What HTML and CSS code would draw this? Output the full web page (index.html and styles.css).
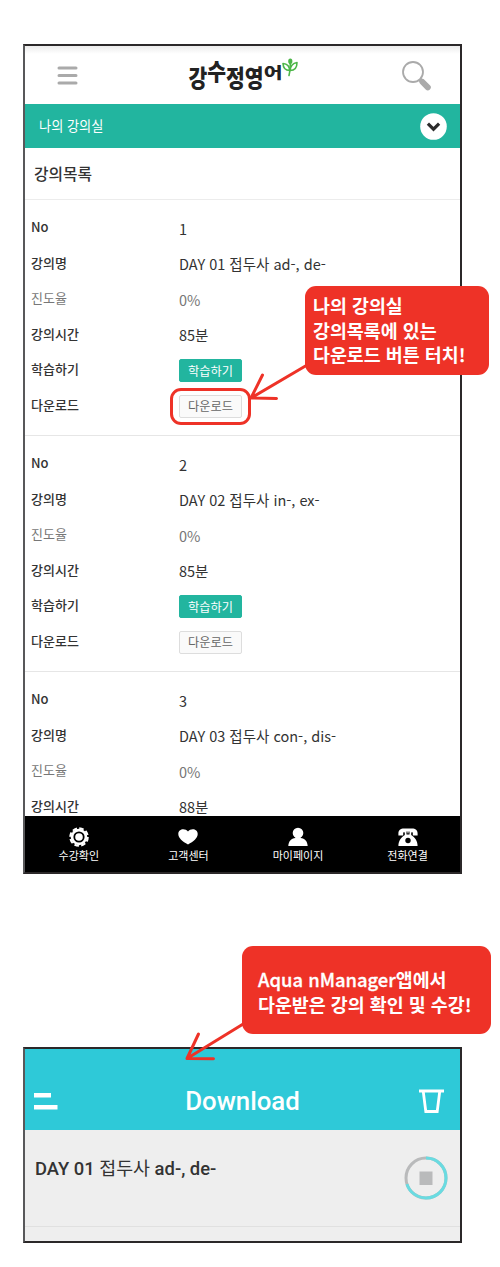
FILE: index.html
```
<!DOCTYPE html>
<html lang="ko">
<head>
  <meta charset="UTF-8" />
  <meta name="viewport" content="width=device-width, initial-scale=1.0"/>
  <title>강수정영어</title>
  <link rel="stylesheet" href="styles.css">
</head>
<body>

  <div class="guide">
    <div class="screen lecture-screen">
      <div class="header">
        <svg class="menu-icon" width="21" height="19" viewBox="0 0 21 19">
          <path d="M2 2h17M2 9.5h17M2 17h17" stroke="#aaa" stroke-width="3" stroke-linecap="round"/>
        </svg>
        <div class="brand">
          <span class="brand-name"><span class="low">강</span><span class="high">수</span><span class="low">정영</span><span class="short">어</span></span>
          <svg class="leaf" width="16" height="19" viewBox="0 0 16 19" fill="none" stroke="#4cb648" stroke-width="1.6" stroke-linecap="round" stroke-linejoin="round">
            <path d="M7 17.5C8 14 8 11 8.300 6"/>
            <path d="M7.700 12.500C3.500 12.500 1.200 10 1 5.500C4.500 5.800 7.500 8 7.700 12.500Z"/>
            <path d="M8.200 12.500C12.500 12.500 15 9.500 15 4.500C11.200 5 8.500 7.500 8.200 12.500Z"/>
            <ellipse cx="8.300" cy="3.200" rx="1.300" ry="2" fill="#4cb648"/>
          </svg>
        </div>
        <svg class="search-icon" width="30" height="30" viewBox="0 0 30 30" fill="none" stroke="#aaa">
          <circle cx="11" cy="11" r="10" stroke-width="1.800"/>
          <path d="M18 18.500l2.500 2.500" stroke-width="4"/>
          <path d="M20.500 21l5.300 5.300" stroke-width="6" stroke-linecap="round"/>
        </svg>
      </div>

      <div class="room-bar">
        <span>나의 강의실</span>
        <svg width="27" height="27" viewBox="0 0 27 27">
          <circle cx="13.500" cy="13.500" r="13.300" fill="#fff"/>
          <path d="M7.900 10.700l5.600 5.500l5.600-5.500" fill="none" stroke="#2b2b2b" stroke-width="3.200"/>
        </svg>
      </div>

      <h2 class="list-title">강의목록</h2>

      <div class="lecture">
        <div class="row"><span class="label">No</span><span class="value">1</span></div>
        <div class="row"><span class="label">강의명</span><span class="value">DAY 01 접두사 ad-, de-</span></div>
        <div class="row muted"><span class="label">진도율</span><span class="value">0%</span></div>
        <div class="row"><span class="label">강의시간</span><span class="value">85분</span></div>
        <div class="row"><span class="label">학습하기</span><button class="study-btn">학습하기</button></div>
        <div class="row"><span class="label">다운로드</span><button class="download-btn">다운로드</button></div>
      </div>

      <div class="lecture">
        <div class="row"><span class="label">No</span><span class="value">2</span></div>
        <div class="row"><span class="label">강의명</span><span class="value">DAY 02 접두사 in-, ex-</span></div>
        <div class="row muted"><span class="label">진도율</span><span class="value">0%</span></div>
        <div class="row"><span class="label">강의시간</span><span class="value">85분</span></div>
        <div class="row"><span class="label">학습하기</span><button class="study-btn">학습하기</button></div>
        <div class="row"><span class="label">다운로드</span><button class="download-btn">다운로드</button></div>
      </div>

      <div class="lecture last">
        <div class="row"><span class="label">No</span><span class="value">3</span></div>
        <div class="row"><span class="label">강의명</span><span class="value">DAY 03 접두사 con-, dis-</span></div>
        <div class="row muted"><span class="label">진도율</span><span class="value">0%</span></div>
        <div class="row"><span class="label">강의시간</span><span class="value">88분</span></div>
      </div>

      <div class="tabbar">
        <div class="tab">
          <svg width="20" height="20" viewBox="0 0 20 20">
            <circle cx="10" cy="10" r="8.800" fill="none" stroke="#fff" stroke-width="2" stroke-dasharray="4.600 2.310"/>
            <circle cx="10" cy="10" r="8.300" fill="#fff"/>
            <circle cx="10" cy="10" r="4.700" fill="#fff" stroke="#000" stroke-width="1.800"/>
          </svg>
          <span>수강확인</span>
        </div>
        <div class="tab">
          <svg width="20" height="20" viewBox="0 0 20 20">
            <path d="M10 17.500C4.500 14.500.3 11 .3 7C.3 1.800 7 .8 10 4.500C13 .8 19.700 1.800 19.700 7C19.700 11 15.500 14.500 10 17.500Z" fill="#fff"/>
          </svg>
          <span>고객센터</span>
        </div>
        <div class="tab">
          <svg width="20" height="20" viewBox="0 0 20 20" fill="#fff">
            <circle cx="10" cy="6" r="5.300"/>
            <path d="M7.500 9h5v2C17 11.500 19.500 14.500 19.700 19H.3C.5 14.500 3 11.500 7.500 11Z"/>
          </svg>
          <span>마이페이지</span>
        </div>
        <div class="tab">
          <svg width="20" height="20" viewBox="0 0 20 20">
            <path d="M.4 8.500V6.500C.4 3 2.500 1.500 6 1.500H14C17.500 1.500 19.600 3 19.600 6.500V8.500H14.800V6.200H5.200V8.500Z" fill="#fff"/>
            <path d="M6.800 4.500h1.700v3h3v-3h1.700v3.500C17 10.500 19.600 14 19.600 19H.4C.4 14 3 10.500 6.800 8Z" fill="#fff"/>
            <path d="M6 5v2M9 4.500v2M11 4.500v2M14 5v2" stroke="#000" stroke-width="1"/>
            <circle cx="10" cy="13.500" r="2.700" fill="#000"/>
          </svg>
          <span>전화연결</span>
        </div>
      </div>
    </div>

    <div class="screen download-screen">
      <div class="download-header">
        <svg width="24" height="17" viewBox="0 0 24 17" fill="#fff">
          <rect y="0" width="17" height="4.500"/>
          <rect y="12" width="23.500" height="4.500"/>
        </svg>
        <span class="download-title">Download</span>
        <svg width="25" height="25" viewBox="0 0 25 25" fill="none" stroke="#fff">
          <path d="M0 2h25" stroke-width="3"/>
          <path d="M4.200 2L6.800 22.500H18.200L20.800 2" stroke-width="2.800"/>
        </svg>
      </div>
      <div class="download-item">
        <span class="download-name">DAY 01 <span class="thin">접두사</span> ad-, de-</span>
        <svg width="44" height="44" viewBox="0 0 44 44">
          <circle cx="22" cy="22" r="20" fill="none" stroke="#b9babb" stroke-width="3"/>
          <circle cx="22" cy="22" r="20" fill="none" stroke="#69dbe1" stroke-width="3" pathLength="100" stroke-dasharray="70 30" transform="rotate(-90 22 22)"/>
          <rect x="15.500" y="15.500" width="13" height="13.500" fill="#b9babb"/>
        </svg>
      </div>
    </div>

    <!-- callouts -->
    <div class="highlight"></div>
    <svg class="arrow arrow-list" width="70" height="42" viewBox="0 0 70 42">
      <path d="M63 3.500L6 37M17.500 14L6 37M6 37L31.500 37.500"/>
    </svg>
    <div class="callout callout-list">나의 강의실<br>강의목록에 있는<br>다운로드 버튼 터치!</div>

    <svg class="arrow arrow-app" width="70" height="42" viewBox="0 0 70 42">
      <path d="M63 2.500L6 37.500M17.500 13L6 37.500M6 37.500L32.500 37.800"/>
    </svg>
    <div class="callout callout-app"><span class="latin">Aqua nManager</span>앱에서<br>다운받은 강의 확인 및 수강!</div>
  </div>

</body>
</html>
```
FILE: styles.css
```
* {
  box-sizing: border-box;
  margin: 0;
  padding: 0;
}

body {
  font-family: 'Noto Sans CJK KR', sans-serif;
  background-color: #fff;
  color: #333;
}

svg {
  display: block;
  flex-shrink: 0;
}

.guide {
  position: relative;
  height: 1267px;
  padding: 44px 38px 0 23px;
}

.screen {
  border: 2px solid #2b2829;
  border-left-color: #58585a;
  overflow: hidden;
}

.lecture-screen {
  display: flex;
  flex-direction: column;
  height: 830px;
}

.header {
  display: flex;
  align-items: flex-start;
  justify-content: space-between;
  flex-shrink: 0;
  height: 58px;
  padding: 12px 28px 0 32px;
  background: linear-gradient(#ececec, #fff 8px);
}

.menu-icon {
  margin-top: 8px;
}

.search-icon {
  margin-top: 3px;
}

.brand {
  display: flex;
  margin-left: 7px;
}

.brand-name {
  display: flex;
  margin-top: 1px;
  font-size: 20.4px;
  font-weight: 900;
  line-height: 29px;
  color: #222;
}

.brand-name .low {
  transform: translateY(3px) scaleY(1.18);
}

.brand-name .high {
  transform: translateY(-3px) scaleY(1.1);
}

.brand-name .short {
  transform: translateY(-2px) scaleY(0.75);
}

.room-bar {
  display: flex;
  align-items: center;
  justify-content: space-between;
  flex-shrink: 0;
  height: 44px;
  padding: 0 13px 0 14px;
  background-color: #22b59f;
  color: #fff;
  font-size: 13.2px;
}

.room-bar span {
  padding-bottom: 1px;
}

.list-title {
  flex-shrink: 0;
  height: 52px;
  line-height: 52px;
  padding-left: 9px;
  border-bottom: 1px solid #ececec;
  font-size: 15.8px;
  font-weight: 500;
}

.lecture {
  flex-shrink: 0;
  height: 236px;
  padding: 9.5px 6px 0;
  border-bottom: 1px solid #e6e6e6;
}

.lecture.last {
  flex: 1;
  min-height: 0;
  border-bottom: none;
  overflow: hidden;
}

.row {
  display: flex;
  align-items: center;
  height: 35.5px;
  font-size: 14.5px;
}

.label {
  width: 148px;
  padding-bottom: 1px;
  font-size: 13px;
  font-weight: 500;
}

.value {
  padding-top: 2px;
}

.muted {
  color: #777;
}

.muted .label {
  font-weight: 400;
}

.study-btn, .download-btn {
  width: 63px;
  height: 23px;
  margin-top: 3px;
  border: 1px solid #22b59f;
  border-radius: 2px;
  background-color: #22b59f;
  color: #fff;
  font-family: inherit;
  font-size: 12.2px;
  line-height: 20px;
}

.download-btn {
  border-color: #ddd;
  background-color: #fafafa;
  color: #666;
}

.tabbar {
  display: flex;
  flex-shrink: 0;
  height: 56px;
  background-color: #000;
  color: #fff;
}

.tab {
  flex: 0 0 109.6px;
  display: flex;
  flex-direction: column;
  align-items: center;
  padding: 11px 2px 0 0;
  font-size: 11px;
  line-height: 17px;
}

.download-screen {
  height: 196px;
  margin-top: 173px;
  background-color: #eee;
}

.download-header {
  display: flex;
  align-items: center;
  justify-content: space-between;
  height: 81px;
  padding: 24px 16px 0 9px;
  background-color: #2ec9d8;
}

.download-title {
  margin-left: 8px;
  padding-bottom: 1px;
  color: #fff;
  font-family: Roboto, sans-serif;
  font-size: 25.8px;
  font-weight: 500;
}

.download-item {
  display: flex;
  align-items: flex-start;
  justify-content: space-between;
  height: 97px;
  padding: 26px 12px 0 10px;
  border-bottom: 1px solid #e0e0e0;
}

.download-name {
  font-family: Roboto, 'Noto Sans CJK KR', sans-serif;
  font-size: 18.4px;
  font-weight: 500;
  line-height: 26px;
}

.download-name .thin {
  font-weight: 400;
}

.highlight {
  position: absolute;
  left: 170px;
  top: 388px;
  width: 81px;
  height: 37px;
  border: 3px solid #ee3227;
  border-radius: 11px;
}

.callout {
  position: absolute;
  border-radius: 11px;
  background-color: #ee3227;
  color: #fff;
  font-size: 18.4px;
  font-weight: 700;
  line-height: 24.7px;
  white-space: nowrap;
}

.callout-list {
  left: 305px;
  top: 286px;
  width: 184px;
  height: 89px;
  padding: 7px 0 0 8px;
}

.callout-app {
  left: 242px;
  top: 946px;
  width: 249px;
  height: 88px;
  padding: 21px 0 0 16px;
}

.latin {
  font-weight: 500;
  -webkit-text-stroke: 0.3px #fff;
}

.arrow {
  position: absolute;
  fill: none;
  stroke: #ee3227;
  stroke-width: 3;
  stroke-linecap: round;
}

.arrow-list {
  left: 245px;
  top: 361px;
}

.arrow-app {
  left: 181px;
  top: 1021px;
}
```
